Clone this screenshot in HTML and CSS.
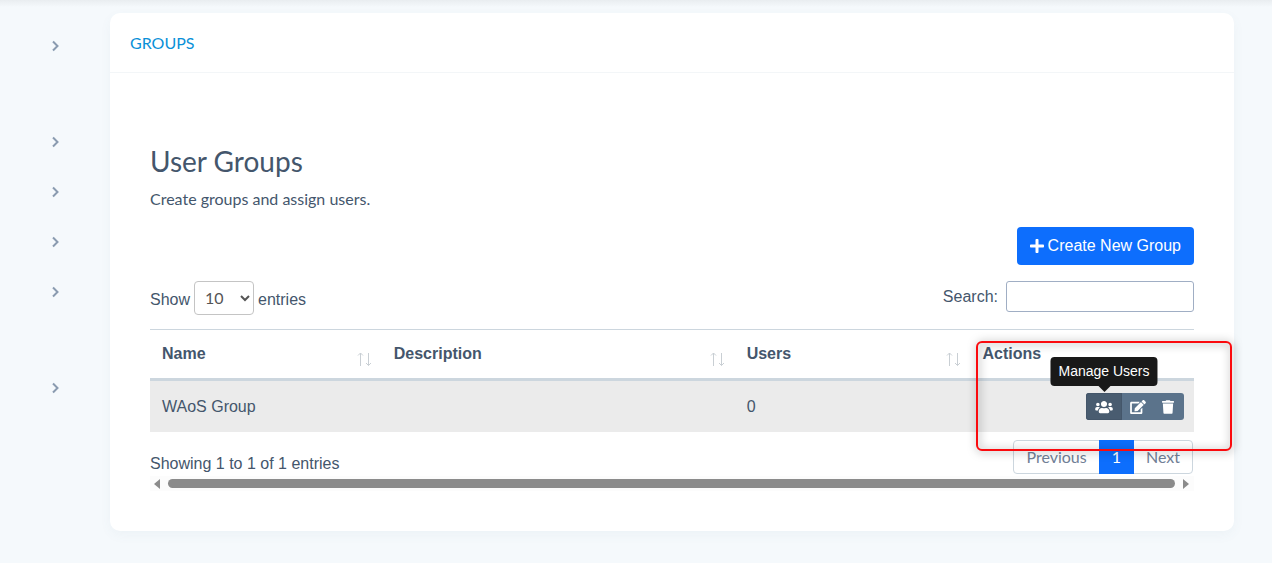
FILE: index.html
```html
<!DOCTYPE html>
<html lang="en">
<head>
  <meta charset="UTF-8">
  <title>User Groups</title>
  <meta name="viewport" content="width=device-width, initial-scale=1.0">
  <link rel="stylesheet" href="styles.css">
</head>
<body>
  <svg class="sprite" aria-hidden="true">
    <symbol id="chevron" viewBox="0 0 10 12"><path d="M3 1.500l4.500 4.500-4.500 4.500" fill="none" stroke="currentColor" stroke-width="2"/></symbol>
    <symbol id="plus" viewBox="0 0 448 512"><path d="M416 208H272V64c0-17.67-14.33-32-32-32h-32c-17.67 0-32 14.33-32 32v144H32c-17.67 0-32 14.33-32 32v32c0 17.67 14.33 32 32 32h144v144c0 17.67 14.33 32 32 32h32c17.67 0 32-14.33 32-32V304h144c17.67 0 32-14.33 32-32v-32c0-17.67-14.33-32-32-32z"/></symbol>
    <symbol id="users" viewBox="0 0 640 512"><path d="M96 224c35.3 0 64-28.7 64-64s-28.7-64-64-64-64 28.7-64 64 28.7 64 64 64zm448 0c35.3 0 64-28.7 64-64s-28.7-64-64-64-64 28.7-64 64 28.7 64 64 64zm32 32h-64c-17.6 0-33.5 7.1-45.1 18.6 40.3 22.1 68.9 62 75.1 109.4h66c17.7 0 32-14.3 32-32v-32c0-35.3-28.7-64-64-64zm-256 0c61.9 0 112-50.1 112-112S381.9 32 320 32 208 82.1 208 144s50.1 112 112 112zm76.8 32h-8.3c-20.8 10-43.9 16-68.5 16s-47.6-6-68.5-16h-8.3C179.6 288 128 339.6 128 403.2V432c0 26.5 21.5 48 48 48h288c26.5 0 48-21.5 48-48v-28.8c0-63.6-51.6-115.2-115.2-115.2zm-223.7-13.4C161.5 263.1 145.6 256 128 256H64c-35.3 0-64 28.7-64 64v32c0 17.7 14.3 32 32 32h65.9c6.3-47.4 34.9-87.3 75.2-109.4z"/></symbol>
    <symbol id="edit" viewBox="0 0 576 512"><path d="M402.6 83.2l90.2 90.2c3.8 3.8 3.8 10 0 13.8L274.4 405.6l-92.8 10.3c-12.4 1.4-22.9-9.1-21.5-21.5l10.3-92.8L388.8 83.2c3.8-3.8 10-3.8 13.8 0zm162-22.9l-48.8-48.8c-15.2-15.2-39.9-15.2-55.2 0l-35.4 35.4c-3.8 3.8-3.8 10 0 13.8l90.2 90.2c3.8 3.8 10 3.8 13.8 0l35.4-35.4c15.2-15.3 15.2-40 0-55.2zM384 346.2V448H64V128h229.8c3.2 0 6.2-1.3 8.5-3.5l40-40c7.6-7.6 2.2-20.5-8.5-20.5H48C21.5 64 0 85.5 0 112v352c0 26.5 21.5 48 48 48h352c26.5 0 48-21.5 48-48V306.2c0-10.7-12.9-16-20.5-8.5l-40 40c-2.2 2.3-3.5 5.3-3.5 8.5z"/></symbol>
    <symbol id="trash" viewBox="0 0 448 512"><path d="M432 32H312l-9.4-18.7A24 24 0 0 0 281.1 0H166.8a23.72 23.72 0 0 0-21.4 13.3L136 32H16A16 16 0 0 0 0 48v32a16 16 0 0 0 16 16h416a16 16 0 0 0 16-16V48a16 16 0 0 0-16-16zM53.2 467a48 48 0 0 0 47.9 45h245.8a48 48 0 0 0 47.9-45L416 128H32z"/></symbol>
    <symbol id="sort" viewBox="0 0 16 16"><path d="M4.5 3v13M2 5.500l2.500-2.500 2.500 2.500M12.500 3v12.500M10 13l2.500 2.500 2.500-2.500" fill="none" stroke="currentColor"/></symbol>
  </svg>

  <nav class="sidebar" aria-label="Main">
    <ul class="menu">
      <li><button type="button" aria-label="Expand"><svg><use href="#chevron"/></svg></button></li>
    </ul>
    <ul class="menu">
      <li><button type="button" aria-label="Expand"><svg><use href="#chevron"/></svg></button></li>
      <li><button type="button" aria-label="Expand"><svg><use href="#chevron"/></svg></button></li>
      <li><button type="button" aria-label="Expand"><svg><use href="#chevron"/></svg></button></li>
      <li><button type="button" aria-label="Expand"><svg><use href="#chevron"/></svg></button></li>
    </ul>
    <ul class="menu">
      <li><button type="button" aria-label="Expand"><svg><use href="#chevron"/></svg></button></li>
    </ul>
  </nav>

  <main class="card">
    <div class="card-header"><a href="#">GROUPS</a></div>
    <div class="card-body">
      <h2>User Groups</h2>
      <p class="intro">Create groups and assign users.</p>

      <div class="toolbar">
        <button type="button" class="btn-primary"><svg><use href="#plus"/></svg>Create New Group</button>
      </div>

      <div class="filters">
        <div class="length">
          <label for="entries">Show</label>
          <select id="entries">
            <option>10</option>
            <option>25</option>
            <option>50</option>
            <option>100</option>
          </select>
          <label for="entries">entries</label>
        </div>
        <div class="search">
          <label for="search">Search:</label>
          <input type="search" id="search">
        </div>
      </div>

      <div class="table-area">
        <table>
          <thead>
            <tr>
              <th class="col-name"><div class="head">Name<svg><use href="#sort"/></svg></div></th>
              <th class="col-desc"><div class="head">Description<svg><use href="#sort"/></svg></div></th>
              <th class="col-users"><div class="head">Users<svg><use href="#sort"/></svg></div></th>
              <th>Actions</th>
            </tr>
          </thead>
          <tbody>
            <tr>
              <td>WAoS Group</td>
              <td></td>
              <td>0</td>
              <td>
                <div class="actions">
                  <button type="button" class="active" aria-describedby="tip"><svg class="icon-users"><use href="#users"/></svg><span class="tooltip" id="tip" role="tooltip">Manage Users</span></button>
                  <button type="button" aria-label="Edit"><svg class="icon-edit"><use href="#edit"/></svg></button>
                  <button type="button" aria-label="Delete"><svg class="icon-trash"><use href="#trash"/></svg></button>
                </div>
              </td>
            </tr>
          </tbody>
        </table>

        <div class="table-footer">
          <div class="info">Showing 1 to 1 of 1 entries</div>
          <div class="pagination">
            <a href="#">Previous</a>
            <a href="#" class="current">1</a>
            <a href="#">Next</a>
          </div>
        </div>
        <div class="highlight"></div>
      </div>

      <div class="scrollbar">
        <span class="arrow arrow-left"></span>
        <span class="thumb"></span>
        <span class="arrow arrow-right"></span>
      </div>
    </div>
  </main>
</body>
</html>
```
FILE: styles.css
```css
* {
  box-sizing: border-box;
}

body {
  margin: 0;
  min-height: 100vh;
  display: flex;
  align-items: flex-start;
  padding: 13px 38px 32px 0;
  background: linear-gradient(#e9edf0, #f5f9fc 7px) no-repeat #f5f9fc;
  font-family: "Liberation Sans", Arial, sans-serif;
  font-size: 16px;
  line-height: 24px;
  color: #44566c;
}

.sprite {
  display: none;
}

svg {
  fill: currentColor;
}

/* Sidebar */
.sidebar {
  flex: 0 0 110px;
  padding-top: 8px;
}

.menu {
  list-style: none;
  margin: 0 0 46px;
  padding: 0;
}

.menu button {
  display: flex;
  align-items: center;
  justify-content: center;
  width: 100%;
  height: 50px;
  padding: 0;
  border: none;
  background: none;
  color: #8a9bb0;
  cursor: pointer;
}

.menu svg {
  width: 10px;
  height: 12px;
}

/* Card */
.card {
  flex: 1;
  min-width: 0;
  background: #fff;
  border-radius: 10px;
  box-shadow: 0 4px 12px rgba(70, 110, 140, 0.05);
}

.card-header {
  padding: 18px 20px 17px;
  border-bottom: 1px solid #f3f6f8;
  font-family: Lato, sans-serif;
}

.card-header a {
  color: #0a90d8;
  text-decoration: none;
}

.card-body {
  padding: 72px 40px 40px;
}

h2 {
  margin: 0 0 10px;
  font-family: Lato, sans-serif;
  font-size: 28px;
  font-weight: 400;
  line-height: 32px;
}

.intro {
  margin: 0 0 16px;
  font-family: Lato, sans-serif;
}

.toolbar {
  display: flex;
  justify-content: flex-end;
  margin-bottom: 16px;
}

.btn-primary {
  display: flex;
  align-items: center;
  gap: 4px;
  height: 38px;
  padding: 0 13px;
  border: 0;
  border-radius: 4px;
  background: #0d6efd;
  color: #fff;
  font: inherit;
  cursor: pointer;
}

.btn-primary svg {
  width: 14px;
  height: 16px;
}

/* Length and search */
.filters {
  display: flex;
  justify-content: space-between;
  align-items: flex-start;
  margin-bottom: 14px;
}

.length {
  display: flex;
  align-items: center;
  gap: 4px;
}

.length label {
  padding-top: 3px;
}

.length select {
  width: 60px;
  height: 34px;
  padding: 0 0 2px 6px;
  border: 1px solid #c4c4c4;
  border-radius: 4px;
  background: #fff;
  color: #555;
  font-family: Lato, sans-serif;
  font-size: 16px;
}

.search {
  display: flex;
  align-items: center;
  gap: 8px;
}

.search input {
  width: 188px;
  height: 31px;
  padding: 4px 8px;
  border: 1px solid #a0aec4;
  border-radius: 3px;
  background: #fff;
  font: inherit;
}

/* Table */
.table-area {
  position: relative;
}

table {
  width: 100%;
  table-layout: fixed;
  border-collapse: separate;
  border-spacing: 0;
}

th {
  padding: 12px;
  border-top: 1px solid #ccd6de;
  border-bottom: 3px solid #ccd6de;
  text-align: left;
  vertical-align: top;
}

.col-name {
  width: 22.2%;
}

.col-desc {
  width: 33.8%;
}

.col-users {
  width: 22.6%;
}

.head {
  display: flex;
  justify-content: space-between;
  align-items: flex-end;
  margin-right: -2px;
}

.head svg {
  width: 16px;
  height: 16px;
  color: #c9cfd4;
}

td {
  height: 51px;
  padding: 0 10px 0 12px;
  background: #ebebeb;
}

.actions {
  display: flex;
  justify-content: flex-end;
}

.actions button {
  position: relative;
  display: flex;
  align-items: center;
  height: 27px;
  padding: 0 8px;
  border: none;
  background: #5b738b;
  color: #fff;
  cursor: pointer;
}

.actions button:first-child {
  padding: 0 9px;
  border-radius: 3px 0 0 3px;
}

.actions button:last-child {
  padding: 0 10px 0 8px;
  border-radius: 0 3px 3px 0;
}

.actions .active {
  background: #495c70;
  box-shadow: inset 0 0 0 1px #44566a;
}

.actions svg {
  height: 14px;
}

.icon-users {
  width: 18px;
}

.icon-edit {
  width: 16px;
}

.icon-trash {
  width: 12px;
}

.tooltip {
  position: absolute;
  bottom: 34px;
  left: 50%;
  transform: translateX(-50%);
  padding: 4px 8px;
  border-radius: 4px;
  background: #191919;
  font-family: "Liberation Sans", Arial, sans-serif;
  font-size: 14px;
  line-height: 21px;
  white-space: nowrap;
}

.tooltip::after {
  content: "";
  position: absolute;
  top: 100%;
  left: 50%;
  margin-left: -6px;
  border: 6px solid transparent;
  border-top-color: #191919;
  border-bottom: none;
}

/* Frame round the actions column */
.highlight {
  position: absolute;
  top: 12px;
  right: -38px;
  width: 256px;
  height: 110px;
  border: 2px solid #fb0a0e;
  border-radius: 6px;
  filter: drop-shadow(1px 1px 4px rgba(0, 0, 0, 0.5));
  pointer-events: none;
}

/* Footer */
.table-footer {
  display: flex;
  justify-content: space-between;
  align-items: flex-start;
  padding: 8px 1px 0 0;
}

.info {
  padding-top: 12px;
}

.pagination {
  display: flex;
  border: 1px solid #ccd6de;
  border-radius: 4px;
  font-family: Lato, sans-serif;
}

.pagination a {
  padding: 4px 12px;
  color: #718096;
  text-decoration: none;
}

.pagination .current {
  margin: -1px 0;
  padding: 5px 13px;
  background: #0d6efd;
  color: #fff;
}

.scrollbar {
  display: flex;
  align-items: center;
  gap: 8px;
  height: 15px;
  padding: 0 5px 0 4px;
  background: #fcfcfc;
}

.thumb {
  flex: 1;
  height: 9px;
  border-radius: 5px;
  background: #8b8b8b;
}

.arrow {
  border: 5px solid transparent;
}

.arrow-left {
  border-right: 6px solid #8b8b8b;
  border-left: none;
}

.arrow-right {
  border-left: 6px solid #8b8b8b;
  border-right: none;
}
```
